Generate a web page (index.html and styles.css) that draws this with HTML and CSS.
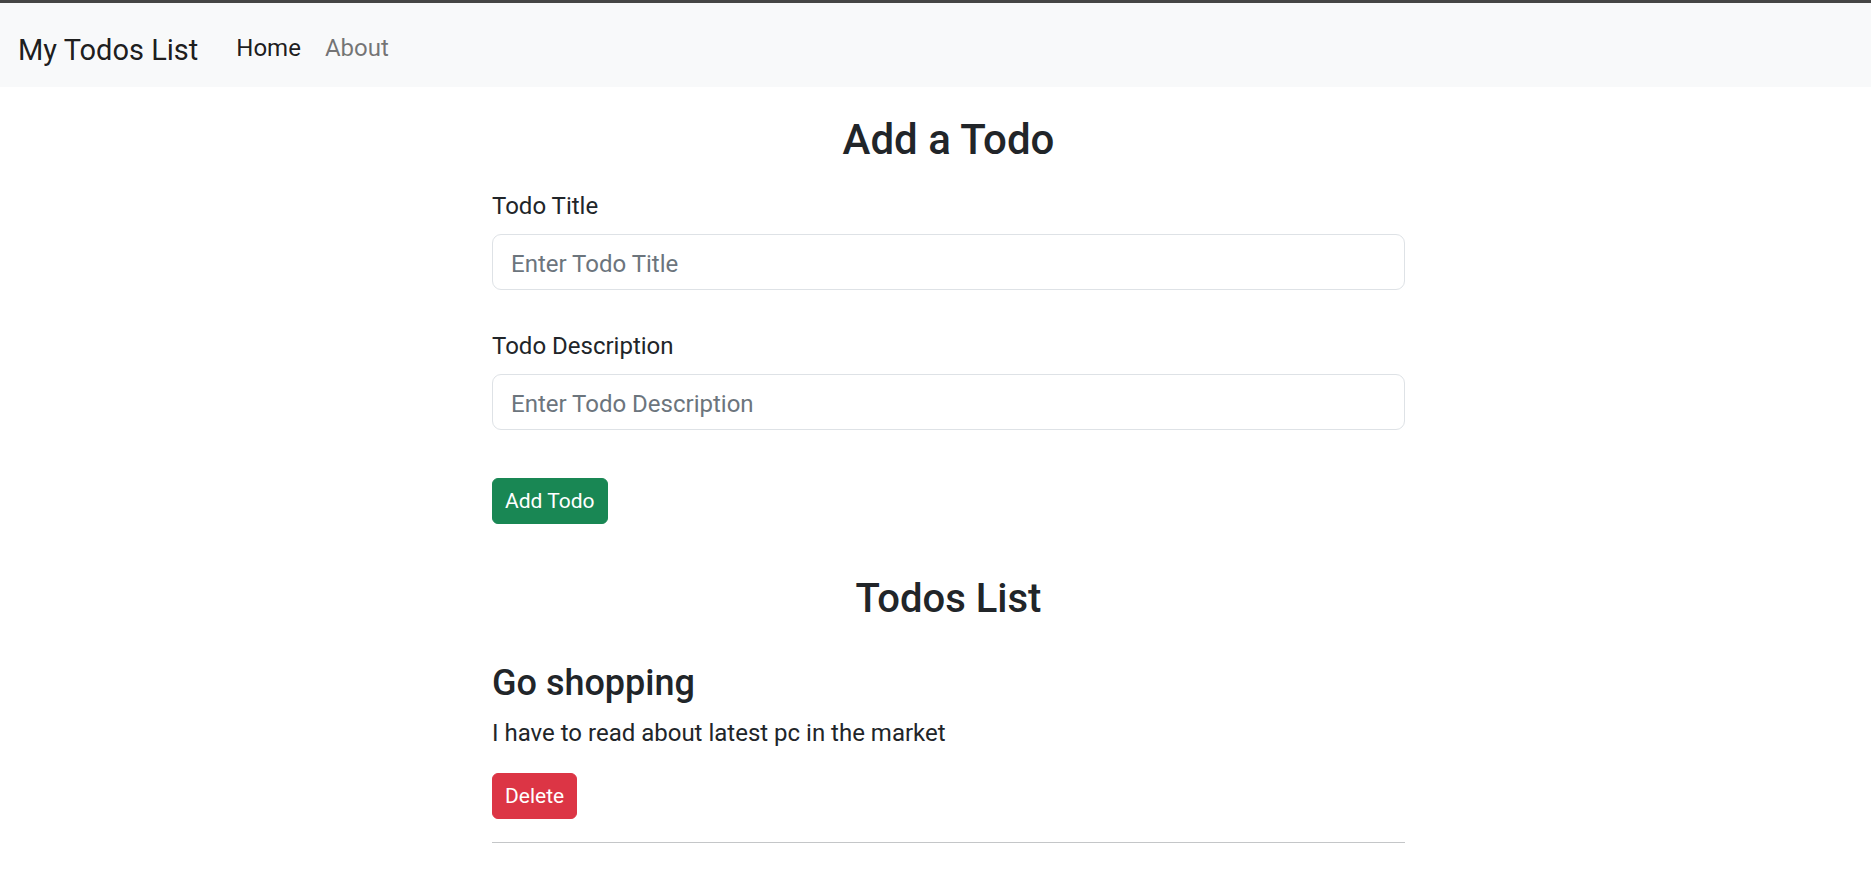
FILE: index.html
```html
<!DOCTYPE html>
<html lang="en">
<head>
<meta charset="utf-8">
<title>My Todos List</title>
<link rel="stylesheet" href="styles.css">
</head>
<body>
<div class="topstrip"></div>
<nav class="navbar">
  <a class="brand" href="#">My Todos List</a>
  <ul class="nav">
    <li><a class="nav-link active" href="#">Home</a></li>
    <li><a class="nav-link" href="#">About</a></li>
  </ul>
</nav>

<main class="container">
  <h3 class="section-title first">Add a Todo</h3>
  <form class="todo-form">
    <div class="field">
      <label class="form-label" for="title">Todo Title</label>
      <input class="form-control" id="title" type="text" placeholder="Enter Todo Title">
    </div>
    <div class="field">
      <label class="form-label" for="desc">Todo Description</label>
      <input class="form-control" id="desc" type="text" placeholder="Enter Todo Description">
    </div>
    <button type="button" class="btn btn-success">Add Todo</button>
  </form>

  <h3 class="section-title second">Todos List</h3>
  <div class="todo">
    <h4 class="todo-title">Go shopping</h4>
    <p class="todo-desc">I have to read about latest pc in the market</p>
    <button type="button" class="btn btn-danger">Delete</button>
    <hr class="divider">
  </div>
</main>
</body>
</html>
```
FILE: styles.css
```css
* { box-sizing: border-box; }

html, body {
  margin: 0;
  padding: 0;
  background: #ffffff;
}

body {
  font-family: Roboto, "Open Sans", "Liberation Sans", sans-serif;
  color: #212529;
  font-size: 24px;
  line-height: 36px;
}

.topstrip {
  height: 3px;
  background: #454545;
}

.navbar {
  height: 84px;
  background: #f8f9fa;
  display: flex;
  align-items: center;
  padding: 6px 18px 0;
}

.brand {
  font-size: 29px;
  line-height: 44px;
  color: rgba(0, 0, 0, 0.9);
  text-decoration: none;
  margin-right: 26px;
  margin-top: 3px;
}

.nav {
  list-style: none;
  margin: 0;
  padding: 0;
  display: flex;
}

.nav-link {
  display: block;
  padding: 12px 12px;
  font-size: 24px;
  line-height: 36px;
  color: rgba(0, 0, 0, 0.55);
  text-decoration: none;
}

.nav-link.active {
  color: rgba(0, 0, 0, 0.9);
}

.container {
  width: 913px;
  margin: 0 0 0 492px;
}

.section-title {
  font-size: 42px;
  line-height: 50px;
  font-weight: 500;
  text-align: center;
  margin: 0;
  color: #212529;
}

.section-title.first {
  margin-top: 28px;
  margin-bottom: 23px;
}

.section-title.second {
  font-size: 40px;
  line-height: 48px;
  margin-top: 51px;
}

.todo-form {
  margin: 0;
}

.field {
  margin-bottom: 38px;
}

.field + .field {
  margin-bottom: 48px;
}

.form-label {
  display: block;
  font-size: 24px;
  line-height: 36px;
  margin-bottom: 10px;
}

.form-control {
  display: block;
  width: 100%;
  height: 56px;
  padding: 11px 18px 7px;
  font-family: inherit;
  font-size: 24px;
  line-height: 36px;
  color: #212529;
  background: #ffffff;
  border: 1px solid #dee2e6;
  border-radius: 9px;
  outline: none;
}

.form-control::placeholder {
  color: #6c757d;
  opacity: 1;
}

.btn {
  display: inline-block;
  font-family: inherit;
  font-size: 21px;
  line-height: 32px;
  padding: 6px 12px;
  border: 1px solid transparent;
  border-radius: 6px;
  color: #ffffff;
  cursor: pointer;
  vertical-align: top;
}

.btn-success {
  background: #198754;
  border-color: #198754;
}

.btn-danger {
  background: #dc3545;
  border-color: #dc3545;
}

.todo-title {
  font-size: 36px;
  line-height: 43px;
  font-weight: 500;
  margin: 39px 0 10px;
}

.todo-desc {
  margin: 0 0 22px;
}

.divider {
  margin: 23px 0 0;
  border: 0;
  border-top: 1px solid #c4c6c8;
  height: 0;
}
```
